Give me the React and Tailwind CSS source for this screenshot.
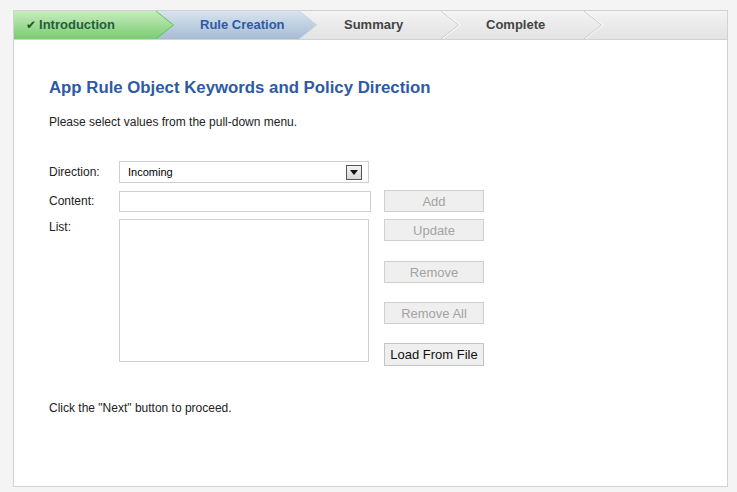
import React from "react";

function StepShape({ id, from, to, stroke, fill }) {
  return (
    <svg className="absolute inset-0" width="160" height="28" viewBox="0 0 160 28">
      {fill && (
        <defs>
          <linearGradient id={id} x1="0" y1="0" x2="0" y2="1">
            <stop offset="0" stopColor={from} />
            <stop offset="1" stopColor={to} />
          </linearGradient>
        </defs>
      )}
      {fill && <polygon points="0,0 142,0 160,14 142,28 0,28" fill={`url(#${id})`} />}
      {fill ? (
        <polyline points="142,0 159.5,14 142,28" fill="none" stroke={stroke} strokeWidth="1" />
      ) : (
        <>
          <polyline points="141,0 158.5,14 141,28" fill="none" stroke="#cdcdcd" strokeWidth="1" />
          <polyline points="142.5,0 160,14 142.5,28" fill="none" stroke="#fafafa" strokeWidth="1" />
        </>
      )}
    </svg>
  );
}

function Btn({ children, disabled }) {
  return (
    <button
      className={
        disabled
          ? "w-[100px] h-[22px] border border-[#cfcfcf] bg-[#efefef] text-[13px] text-[#a3a3a3] leading-none"
          : "w-[100px] h-[23px] border border-[#c4c4c4] bg-[#efefef] text-[13px] text-[#111] leading-none"
      }
    >
      {children}
    </button>
  );
}

export default function App() {
  return (
    <div className="w-[737px] h-[492px] bg-[#f4f4f4] pt-[10px] pl-[13px] font-['Liberation_Sans',Arial,sans-serif]">
      <div className="w-[715px] h-[477px] border border-[#d2d2d2] bg-white flex flex-col">
        {/* wizard header */}
        <div className="h-[29px] border-b border-[#d2d2d2] bg-gradient-to-b from-[#f3f3f3] to-[#e3e3e3] flex">
          <div className="relative z-40 w-[160px] h-[28px] shrink-0 flex items-center pl-[12px]">
            <StepShape id="g1" from="#c6edbe" to="#7acb71" stroke="#5fc552" fill />
            <span className="relative text-[12px] leading-none text-[#1e5a1e] font-['DejaVu_Sans',sans-serif] mr-[3px]">✔</span>
            <span className="relative text-[13px] font-bold text-[#265d3b]">Introduction</span>
          </div>
          <div className="relative z-30 w-[160px] h-[28px] shrink-0 -ml-[17px] flex items-center pl-[43px]">
            <StepShape id="g2" from="#d8e4ef" to="#a6bbd3" stroke="#c4d3e3" fill />
            <span className="relative text-[13px] font-bold text-[#2e5aa5]">Rule Creation</span>
          </div>
          <div className="relative z-20 w-[160px] h-[28px] shrink-0 -ml-[17px] flex items-center pl-[44px]">
            <StepShape />
            <span className="relative text-[13px] font-bold text-[#444]">Summary</span>
          </div>
          <div className="relative z-10 w-[160px] h-[28px] shrink-0 -ml-[17px] flex items-center pl-[43px]">
            <StepShape />
            <span className="relative text-[13px] font-bold text-[#444]">Complete</span>
          </div>
        </div>

        {/* content */}
        <div className="pl-[35px] pt-[38px] text-[12px] text-[#222]">
          <h1 className="text-[16.8px] leading-[20px] font-bold text-[#2e5aa5]">
            App Rule Object Keywords and Policy Direction
          </h1>
          <p className="mt-[16px] leading-[16px]">Please select values from the pull-down menu.</p>

          <div className="mt-[31px] flex items-center h-[22px]">
            <span className="w-[70px]">Direction:</span>
            <div className="w-[250px] h-[22px] border border-[#cfcfcf] flex items-center justify-between pl-[8px] pr-[6px]">
              <span className="text-[11px] text-black">Incoming</span>
              <div className="w-[16px] h-[15px] border border-[#555] bg-gradient-to-b from-[#f4f4f4] to-[#d8d8d8] flex items-center justify-center">
                <svg width="8" height="5" viewBox="0 0 8 5">
                  <polygon points="0,0 8,0 4,5" fill="#111" />
                </svg>
              </div>
            </div>
          </div>

          <div className="mt-[7px] flex items-center h-[22px]">
            <span className="w-[70px]">Content:</span>
            <div className="w-[252px] h-[21px] mt-[1px] border border-[#cfcfcf]"></div>
            <div className="ml-[13px]">
              <Btn disabled>Add</Btn>
            </div>
          </div>

          <div className="mt-[7px] flex items-start">
            <span className="w-[70px] leading-[16px]">List:</span>
            <div className="w-[250px] h-[143px] border border-[#cfcfcf]"></div>
            <div className="ml-[15px] flex flex-col gap-[19px]">
              <div className="h-[23px]"><Btn disabled>Update</Btn></div>
              <Btn disabled>Remove</Btn>
              <Btn disabled>Remove All</Btn>
              <Btn>Load From File</Btn>
            </div>
          </div>

          <p className="mt-[34px] leading-[16px]">Click the "Next" button to proceed.</p>
        </div>
      </div>
    </div>
  );
}
